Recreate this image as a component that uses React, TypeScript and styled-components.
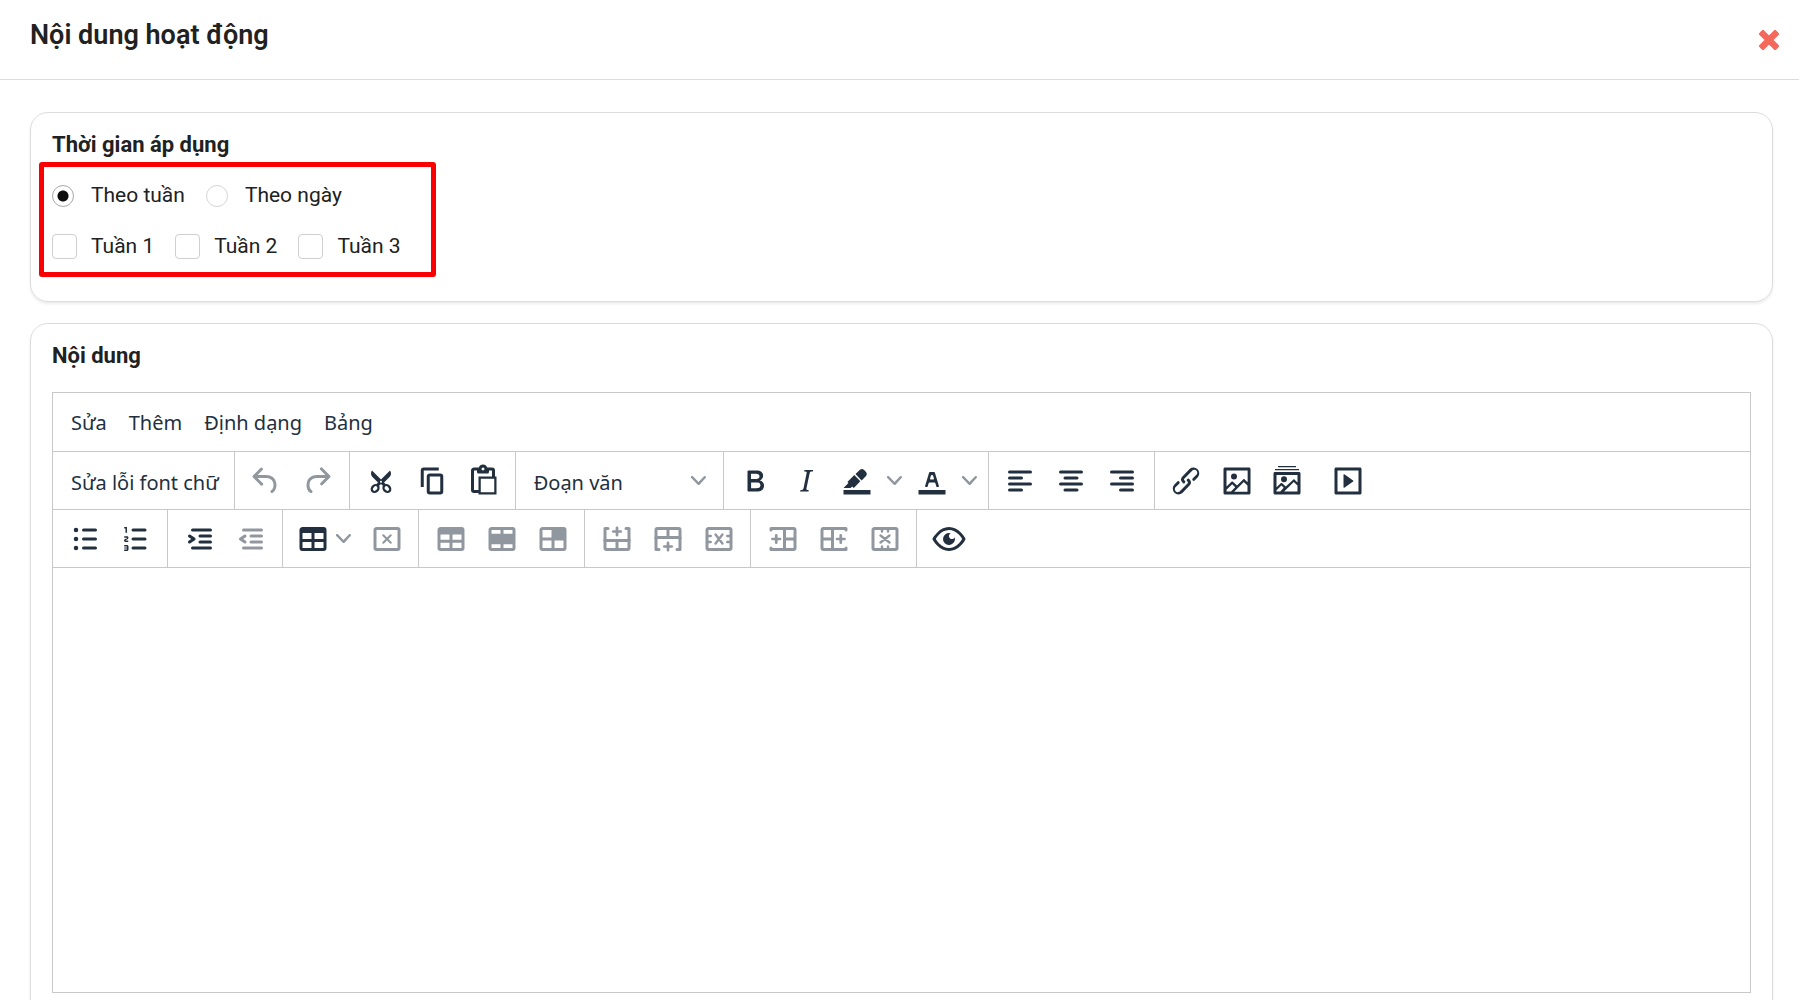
import React from "react";
import styled, { createGlobalStyle } from "styled-components";

const ink = "#222f3e";
const muted = "#91979f";
const line = "#c8c8c8";
const uiFont = `"Segoe UI", "Noto Sans", "Open Sans", sans-serif`;

const GlobalStyle = createGlobalStyle`
  * { box-sizing: border-box; }
  body {
    margin: 0;
    background: #fff;
    color: #212121;
    font-family: Roboto, "Noto Sans", sans-serif;
  }
  button, input, select, textarea { font: inherit; color: inherit; margin: 0; }
`;

const Dialog = styled.div`
  height: 100vh;
  display: flex;
  flex-direction: column;
  overflow: hidden;
`;

const Header = styled.header`
  flex: none;
  display: flex;
  align-items: flex-start;
  justify-content: space-between;
  height: 80px;
  padding: 18px 19px 0 30px;
  border-bottom: 1px solid #dcdcdc;
`;

const Title = styled.h1`
  margin: 0;
  font-size: 27px;
  line-height: 34px;
  font-weight: 600;
`;

const CloseButton = styled.button`
  display: flex;
  padding: 12px 0;
  width: 22px;
  justify-content: center;
  border: 0;
  background: none;
  cursor: pointer;
`;

const Body = styled.main`
  flex: 1;
  min-height: 0;
  overflow: hidden;
  padding: 32px 26px 32px 30px;
  display: flex;
  flex-direction: column;
  gap: 21px;
`;

const Card = styled.section`
  flex: none;
  padding: 18px 21px 24px;
  border: 1px solid #dcdcdc;
  border-radius: 18px;
  box-shadow: 0 2px 3px rgba(0, 0, 0, 0.08);
`;

const CardTitle = styled.h2`
  margin: 0;
  font-size: 22px;
  line-height: 28px;
  font-weight: 700;
`;

const Options = styled.div`
  width: fit-content;
  margin: 3px 0 0 -13px;
  padding: 16px 30px 13px 8px;
  border: 5px solid #fb0000;
  border-radius: 3px;
  display: flex;
  flex-direction: column;
  gap: 26px;
`;

const OptionRow = styled.div`
  display: flex;
  gap: 21px;
`;

const Option = styled.label`
  display: grid;
  grid-template-columns: 39px auto;
  align-items: center;
  height: 25px;
  font-size: 21px;
  line-height: 25px;
  white-space: nowrap;
`;

const Radio = styled.input.attrs({ type: "radio" })`
  appearance: none;
  width: 22px;
  height: 22px;
  border: 1px solid #d4d4d4;
  border-radius: 50%;
  background: #fff;
  &:checked {
    border-color: #a8a8a8;
    background: radial-gradient(circle, #0c0c0c 5px, #fff 6px);
  }
`;

const Check = styled.input.attrs({ type: "checkbox" })`
  appearance: none;
  width: 25px;
  height: 25px;
  border: 1px solid #cfcfcf;
  border-radius: 4px;
  background: #fff;
  &:checked { background: #0c0c0c; }
`;

const Editor = styled.div`
  margin-top: 22px;
  border: 1px solid ${line};
  color: ${ink};
  font-family: ${uiFont};
  font-size: 20px;
`;

const MenuBar = styled.div`
  display: flex;
  align-items: center;
  height: 59px;
  padding: 0 7px;
  border-bottom: 1px solid ${line};
`;

const MenuButton = styled.button`
  height: 51px;
  padding: 1px 11px 0;
  border: 0;
  background: none;
`;

const Toolbar = styled.div`
  display: flex;
  height: 58px;
  border-bottom: 1px solid ${line};
`;

const Group = styled.div`
  display: flex;
  align-items: center;
  padding: 0 6px;
  border-right: 1px solid ${line};
  &:last-child { border-right: 0; }
`;

const ToolButton = styled.button<{ $width?: number; $start?: boolean }>`
  display: flex;
  align-items: center;
  justify-content: ${(p) => (p.$start ? "flex-start" : "center")};
  width: ${(p) => p.$width ?? 51}px;
  height: 51px;
  padding: ${(p) => (p.$start ? "0 6px" : "0")};
  border: 0;
  background: none;
  color: ${ink};
  &:disabled { color: ${muted}; }
`;

const TextButton = styled.button`
  height: 51px;
  padding: 3px 9px 0 12px;
  border: 0;
  background: none;
  white-space: nowrap;
`;

const SelectBox = styled.div`
  display: grid;
  grid-template-columns: 1fr 24px 6px;
  align-items: center;
  width: 195px;
`;

const Select = styled.select`
  grid-area: 1 / 1 / 2 / 4;
  appearance: none;
  height: 51px;
  padding: 3px 12px 0;
  border: 0;
  background: none;
`;

const ChevronSlot = styled.span`
  display: flex;
  justify-content: center;
  width: 24px;
  color: ${muted};
  pointer-events: none;
`;

const SelectChevron = styled(ChevronSlot)`
  grid-area: 1 / 2;
`;

const ChevronButton = styled.button`
  display: flex;
  align-items: center;
  justify-content: center;
  width: 24px;
  height: 51px;
  padding: 0;
  border: 0;
  background: none;
  color: ${muted};
`;

const Content = styled.textarea`
  display: block;
  width: 100%;
  height: 424px;
  padding: 16px;
  border: 0;
  outline: 0;
  resize: none;
  background: #fff;
`;

const Glyph = ({ children }: { children: React.ReactNode }) => (
  <svg width="36" height="36" viewBox="0 0 24 24" fill="currentColor" fillRule="evenodd" aria-hidden="true">
    {children}
  </svg>
);

const Chevron = () => (
  <svg width="15" height="15" viewBox="0 0 10 10" fill="currentColor" aria-hidden="true">
    <path d="M8.7 2.2c.3-.3.8-.3 1 0 .4.4.4.9 0 1.2L5.7 7.8c-.3.3-.9.3-1.2 0L.2 3.4a.8.8 0 0 1 0-1.2c.3-.3.8-.3 1.1 0L5 6l3.7-3.8z" />
  </svg>
);

const bars = (rows: [number, number, number][]) => (
  <g stroke="currentColor" strokeWidth="2" strokeLinecap="round">
    {rows.map(([x1, x2, y]) => (
      <path key={y} d={`M${x1} ${y}H${x2}`} />
    ))}
  </g>
);

const stroked = (d: string, width = 1.6) => (
  <path d={d} fill="none" stroke="currentColor" strokeWidth={width} strokeLinecap="round" strokeLinejoin="round" />
);

const frame = "M19 4a2 2 0 0 1 2 2v12a2 2 0 0 1-2 2H5a2 2 0 0 1-2-2V6c0-1.1.9-2 2-2h14z";

const icons: Record<string, React.ReactNode> = {
  undo: <path d="M6.4 8H12c3.7 0 6.2 2 6.8 5.1.6 2.7-.4 5.6-2.3 6.8a1 1 0 0 1-1-1.8c1.1-.6 1.8-2.7 1.4-4.6-.5-2.1-2.1-3.5-4.9-3.5H6.4l3.3 3.3a1 1 0 1 1-1.4 1.4l-5-5a1 1 0 0 1 0-1.4l5-5a1 1 0 0 1 1.4 1.4L6.4 8z" />,
  redo: <path d="M17.6 10H12c-2.8 0-4.4 1.4-4.9 3.5-.4 2 .3 4 1.4 4.6a1 1 0 1 1-1 1.8c-2-1.2-2.9-4.1-2.3-6.8.6-3 3-5.1 6.8-5.1h5.6l-3.3-3.3a1 1 0 1 1 1.4-1.4l5 5a1 1 0 0 1 0 1.4l-5 5a1 1 0 0 1-1.4-1.4l3.3-3.3z" />,
  cut: (
    <>
      <path d="M6 5l6 6 6-6 .5 1a3.3 3.3 0 0 1 0 2c0 .4-.3.7-.5 1l-4 4 1.2 1.2-1.6 1.3L12 14l-1.6 1.5-1.6-1.3L10 13 6 9l-.5-1a3.3 3.3 0 0 1 0-2c0-.4.3-.7.5-1zm6 6.8a.7.7 0 1 0 0 1.4.7.7 0 0 0 0-1.4z" />
      <g fill="none" stroke="currentColor" strokeWidth="1.5">
        <ellipse cx="8.1" cy="17" rx="2.5" ry="2" transform="rotate(-45 8.1 17)" />
        <ellipse cx="15.9" cy="17" rx="2.5" ry="2" transform="rotate(45 15.9 17)" />
      </g>
    </>
  ),
  copy: <path d="M16 3H6a2 2 0 0 0-2 2v11h2V5h10V3zm1 4a2 2 0 0 1 2 2v10a2 2 0 0 1-2 2h-7a2 2 0 0 1-2-2V9c0-1.2.9-2 2-2h7zm0 12V9h-7v10h7z" transform="translate(.5 0)" />,
  paste: <path d="M18 9V5h-2v1c0 .6-.4 1-1 1H9a1 1 0 0 1-1-1V5H6v13h3V9h9zM9 20H6a2 2 0 0 1-2-2V5c0-1.1.9-2 2-2h3.2A3 3 0 0 1 12 1a3 3 0 0 1 2.8 2H18a2 2 0 0 1 2 2v4h1v12H9v-1zm1.5-9.5v9h9v-9h-9zM12 3a1 1 0 0 0-1 1c0 .5.4 1 1 1s1-.5 1-1-.4-1-1-1z" />,
  bold: <path d="M7.8 19c-.3 0-.5 0-.6-.2l-.2-.5V5.7c0-.2 0-.4.2-.5l.6-.2h5c1.5 0 2.7.3 3.5 1 .7.6 1.1 1.4 1.1 2.5a3 3 0 0 1-.6 1.9c-.4.6-1 1-1.6 1.2.4.1.9.3 1.3.6s.8.7 1 1.2c.4.4.5 1 .5 1.6 0 1.3-.4 2.3-1.3 3-.8.7-2.1 1-3.8 1H7.8zm5-8.3c.6 0 1.2-.1 1.6-.5.4-.3.6-.7.6-1.3 0-1.1-.8-1.7-2.3-1.7H9.3v3.5h3.4zm.5 6c.7 0 1.3-.1 1.7-.4.4-.4.6-.9.6-1.5s-.2-1-.7-1.4c-.4-.3-1-.4-2-.4H9.4v3.8h4z" />,
  italic: <path d="M16.7 4.7l-.1.9h-.3c-.6 0-1 0-1.4.3-.3.3-.4.6-.5 1.1l-2.1 9.8v.6c0 .5.4.8 1.4.8h.2l-.2.8H8l.2-.8h.2c1.1 0 1.8-.5 2-1.5l2-9.8.1-.5c0-.6-.4-.8-1.4-.8h-.3l.2-.9h5.8z" />,
  highlight: (
    <>
      <path d="M3 18h18v3H3z" />
      <path d="M7.7 16.7H3l3.3-3.3-.7-.8L10.2 8l4 4.1-4 4.2c-.2.2-.6.2-.8 0l-.6-.7-1.1 1.1zm5-7.5L11 7.4l3-2.9a2 2 0 0 1 2.6 0L18 6c.7.7.7 2 0 2.7l-2.9 2.9-1.8-1.8-.6-.6z" />
    </>
  ),
  textColor: (
    <>
      <path d="M3 18h18v3H3z" />
      <path d="M8.7 16h-.8a.5.5 0 0 1-.5-.6l2.7-9c.1-.3.3-.4.5-.4h2.8c.2 0 .4.1.5.4l2.7 9a.5.5 0 0 1-.5.6h-.8a.5.5 0 0 1-.4-.4l-.7-2.2c0-.3-.3-.4-.5-.4h-3.4c-.2 0-.4.1-.5.4l-.7 2.2c0 .3-.2.4-.4.4zm2.6-7.6l-.6 2a.5.5 0 0 0 .5.6h1.6a.5.5 0 0 0 .5-.6l-.6-2c0-.3-.3-.4-.5-.4h-.4c-.2 0-.4.1-.5.4z" />
    </>
  ),
  alignLeft: bars([[5, 19, 6], [5, 13, 10], [5, 19, 14], [5, 13, 18]]),
  alignCenter: bars([[5, 19, 6], [8, 16, 10], [5, 19, 14], [8, 16, 18]]),
  alignRight: bars([[5, 19, 6], [11, 19, 10], [5, 19, 14], [11, 19, 18]]),
  link: <path d="M6.2 12.3a1 1 0 0 1 1.4 1.4l-2.1 2a2 2 0 1 0 2.7 2.8l4.8-4.8a1 1 0 0 0 0-1.4 1 1 0 1 1 1.4-1.3 2.9 2.9 0 0 1 0 4L9.6 20a3.9 3.9 0 0 1-5.5-5.5l2-2zm11.6-.6a1 1 0 0 1-1.4-1.4l2-2a2 2 0 1 0-2.6-2.8L11 10.3a1 1 0 0 0 0 1.4A1 1 0 1 1 9.6 13a2.9 2.9 0 0 1 0-4L14.4 4a3.9 3.9 0 0 1 5.5 5.5l-2 2z" />,
  image: <path d="M5 15.7l3.3-3.2c.3-.3.7-.3 1 0L12 15l4.1-4c.3-.4.8-.4 1 0l2 1.9V5H5v10.7zM5 18V19h3l2.8-2.9-2-2L5 17.9zm14-3l-2.5-2.4-6.4 6.5H19v-4zM4 3h16c.6 0 1 .4 1 1v16c0 .6-.4 1-1 1H4a1 1 0 0 1-1-1V4c0-.6.4-1 1-1zm6 8a2 2 0 1 0 0-4 2 2 0 0 0 0 4z" />,
  gallery: (
    <>
      <path d="M5 16.2l2.8-2.7c.3-.3.7-.3 1 0l2.4 2.1 4.9-4.5c.3-.4.8-.4 1 0l1.9 1.9V8H5v8.2zM5 18.2V19h2.5l2.3-2.5-1.5-1.5L5 18.2zm14-3.2l-2.5-2.4-6.4 6.4H19v-4zM4 6h16c.6 0 1 .4 1 1v13c0 .6-.4 1-1 1H4a1 1 0 0 1-1-1V7c0-.6.4-1 1-1zm6 6.800a2 2 0 1 0 0-4 2 2 0 0 0 0 4z" />
      <path d="M4 4h16v.8H4zM6 2h12v.8H6z" />
    </>
  ),
  media: <path d="M4 3h16c.6 0 1 .4 1 1v16c0 .6-.4 1-1 1H4a1 1 0 0 1-1-1V4c0-.6.4-1 1-1zm1 2v14h14V5H5zm4.8 2.6l5.6 4a.5.5 0 0 1 0 .8l-5.6 4A.5.5 0 0 1 9 16V8a.5.5 0 0 1 .8-.4z" />,
  bullets: (
    <>
      {bars([[11, 19, 6], [11, 19, 12], [11, 19, 18]])}
      <circle cx="6" cy="6" r="1.5" />
      <circle cx="6" cy="12" r="1.5" />
      <circle cx="6" cy="18" r="1.5" />
    </>
  ),
  numbers: (
    <>
      {bars([[10, 18, 6], [10, 18, 12], [10, 18, 18]])}
      <path d="M6 4v3.5c0 .3-.2.5-.5.5a.5.5 0 0 1-.5-.5V5h-.5a.5.5 0 0 1 0-1H6zm-1 8.8l.2.2h1.3c.3 0 .5.2.5.5s-.2.5-.5.5H4.9a1 1 0 0 1-.9-1V13c0-.4.3-.8.6-1l1.2-.4.2-.3a.2.2 0 0 0-.2-.2H4.5a.5.5 0 0 1-.5-.5c0-.3.2-.5.5-.5h1.6c.5 0 .9.4.9 1v.1c0 .4-.3.8-.6 1l-1.2.4-.2.3zM7 17v2c0 .6-.4 1-1 1H4.5a.5.5 0 0 1 0-1h1.2c.2 0 .3-.1.3-.3 0-.2-.1-.3-.3-.3H4.4a.4.4 0 1 1 0-.8h1.3c.2 0 .3-.1.3-.3 0-.2-.1-.3-.3-.3H4.5a.5.5 0 1 1 0-1H6c.6 0 1 .4 1 1z" />
    </>
  ),
  indent: (
    <>
      {bars([[7, 19, 6], [12, 19, 10], [12, 19, 14], [7, 19, 18]])}
      <path d="M4.4 13.2L6.2 12l-1.8-1.2a1 1 0 0 1 1.2-1.6l3 2a1 1 0 0 1 0 1.6l-3 2a1 1 0 1 1-1.2-1.6z" />
    </>
  ),
  outdent: (
    <>
      {bars([[7, 19, 6], [12, 19, 10], [12, 19, 14], [7, 19, 18]])}
      <path d="M8.6 13.2a1 1 0 0 1-1.2 1.6l-3-2a1 1 0 0 1 0-1.6l3-2a1 1 0 0 1 1.2 1.6L6.8 12l1.8 1.2z" />
    </>
  ),
  table: <path d={`${frame}M5 14v4h6v-4H5zm14 0h-6v4h6v-4zm0-6h-6v4h6V8zM5 12h6V8H5v4z`} />,
  tableDelete: (
    <>
      <path d={`${frame}M5 6v12h14V6H5z`} />
      {stroked("M9.5 9.5l5 5M14.5 9.5l-5 5", 1.4)}
    </>
  ),
  tableRowProps: <path d={`${frame}M5 14.5V18h6v-3.5H5zm14 0h-6V18h6v-3.5zm0-5.5h-6v3.5h6V9zM5 12.5h6V9H5v3.5z`} />,
  tableRow: <path d={`${frame}M5 15.5V18h6v-2.5H5zm8 0V18h6v-2.5h-6zM5 6v2.5h6V6H5zm8 0v2.5h6V6h-6z`} />,
  tableCell: <path d={`${frame}M5 6v5h6V6H5zm0 7v5h6v-5H5zm8 0v5h6v-5h-6z`} />,
  rowAbove: (
    <>
      <path d="M3 12h18v6a2 2 0 0 1-2 2H5a2 2 0 0 1-2-2v-6zm2 2v4h6v-4H5zm8 0v4h6v-4h-6z" />
      {stroked("M6 5H4v8M18 5h2v8", 2)}
      {stroked("M12 4.5v5M9.5 7h5", 1.8)}
    </>
  ),
  rowBelow: (
    <>
      <path d="M3 12h18V6a2 2 0 0 0-2-2H5a2 2 0 0 0-2 2v6zm2-2V6h6v4H5zm8 0V6h6v4h-6z" />
      {stroked("M6 19H4v-8M18 19h2v-8", 2)}
      {stroked("M12 14.5v5M9.5 17h5", 1.8)}
    </>
  ),
  rowDelete: (
    <>
      <path d={`${frame}M5 6v12h14V6H5z`} />
      {stroked("M9.7 9l4.6 6M14.3 9l-4.6 6M4 10h2.5M4 14h2.5M17.5 10h2.500M17.5 14h2.500")}
    </>
  ),
  colBefore: (
    <>
      <path d="M12 4h7a2 2 0 0 1 2 2v12a2 2 0 0 1-2 2h-7V4zm2 2v5h5V6h-5zm0 7v5h5v-5h-5z" />
      {stroked("M4 6V5h9M4 18v1h9", 2)}
      {stroked("M7.500 9.5v5M5 12h5", 1.8)}
    </>
  ),
  colAfter: (
    <>
      <path d="M12 4H5a2 2 0 0 0-2 2v12a2 2 0 0 0 2 2h7V4zM10 6v5H5V6h5zm0 7v5H5v-5h5z" />
      {stroked("M20 6V5h-9M20 18v1h-9", 2)}
      {stroked("M16.5 9.5v5M14 12h5", 1.8)}
    </>
  ),
  colDelete: (
    <>
      <path d={`${frame}M5 6v12h14V6H5z`} />
      {stroked("M9 9.7l6 4.6M15 9.7l-6 4.6M10 5v2M14 5v2M10 17v2M14 17v2")}
    </>
  ),
  preview: <path d="M3.5 12.5c.5.8 1.1 1.6 1.8 2.3 2 2 4.2 3.2 6.7 3.2s4.7-1.2 6.7-3.2a16.2 16.2 0 0 0 2.1-2.8 15.7 15.7 0 0 0-2.1-2.8c-2-2-4.2-3.2-6.7-3.2a9.3 9.3 0 0 0-6.7 3.2A16.2 16.2 0 0 0 3.2 12c0 .2.2.3.3.5zm-2.4-1l.7-1.2L4 7.8C6.2 5.4 8.9 4 12 4c3 0 5.8 1.4 8.1 3.8a18.2 18.2 0 0 1 2.8 3.7v1l-.7 1.2a18.2 18.2 0 0 1-2.1 2.5c-2.3 2.4-5 3.8-8.1 3.8-3 0-5.8-1.4-8.1-3.8a18.2 18.2 0 0 1-2.8-3.7 1 1 0 0 1 0-1zm12-3.3a2 2 0 1 0 2.7 2.6 4 4 0 1 1-2.6-2.6z" />,
};

type ToolProps = { icon: string; label: string; disabled?: boolean; width?: number; start?: boolean };

const Tool = ({ icon, label, disabled, width, start }: ToolProps) => (
  <ToolButton type="button" aria-label={label} disabled={disabled} $width={width} $start={start}>
    <Glyph>{icons[icon]}</Glyph>
  </ToolButton>
);

const SplitTool = ({ icon, label }: ToolProps) => (
  <>
    <Tool icon={icon} label={label} />
    <ChevronButton type="button" aria-label={`${label}: tùy chọn`}>
      <Chevron />
    </ChevronButton>
  </>
);

export default function App() {
  return (
    <Dialog role="dialog" aria-labelledby="dialog-title">
      <GlobalStyle />
      <Header>
        <Title id="dialog-title">Nội dung hoạt động</Title>
        <CloseButton type="button" aria-label="Đóng">
          <svg width="20" height="20" viewBox="0 0 20 20" aria-hidden="true">
            <path d="M4 4l12 12M16 4L4 16" stroke="#f4695c" strokeWidth="6.5" strokeLinecap="square" />
            <path d="M3.5 3.5l13 13M16.5 3.5l-13 13" stroke="#f4695c" strokeWidth="5" strokeLinecap="round" />
          </svg>
        </CloseButton>
      </Header>
      <Body>
        <Card>
          <CardTitle id="apply-time">Thời gian áp dụng</CardTitle>
          <Options role="group" aria-labelledby="apply-time">
            <OptionRow>
              <Option><Radio name="period" defaultChecked />Theo tuần</Option>
              <Option><Radio name="period" />Theo ngày</Option>
            </OptionRow>
            <OptionRow>
              {[1, 2, 3].map((n) => (
                <Option key={n}><Check name="week" value={n} /><span>Tuần {n}</span></Option>
              ))}
            </OptionRow>
          </Options>
        </Card>
        <Card>
          <CardTitle>Nội dung</CardTitle>
          <Editor>
            <MenuBar>
              {["Sửa", "Thêm", "Định dạng", "Bảng"].map((m) => (
                <MenuButton type="button" key={m}>{m}</MenuButton>
              ))}
            </MenuBar>
            <Toolbar>
              <Group><TextButton type="button">Sửa lỗi font chữ</TextButton></Group>
              <Group>
                <Tool icon="undo" label="Hoàn tác" disabled />
                <Tool icon="redo" label="Làm lại" disabled />
              </Group>
              <Group>
                <Tool icon="cut" label="Cắt" />
                <Tool icon="copy" label="Sao chép" />
                <Tool icon="paste" label="Dán" />
              </Group>
              <Group>
                <SelectBox>
                  <Select aria-label="Kiểu khối"><option>Đoạn văn</option></Select>
                  <SelectChevron><Chevron /></SelectChevron>
                </SelectBox>
              </Group>
              <Group>
                <Tool icon="bold" label="In đậm" />
                <Tool icon="italic" label="In nghiêng" />
                <SplitTool icon="highlight" label="Màu nền" />
                <SplitTool icon="textColor" label="Màu chữ" />
              </Group>
              <Group>
                <Tool icon="alignLeft" label="Căn trái" />
                <Tool icon="alignCenter" label="Căn giữa" />
                <Tool icon="alignRight" label="Căn phải" />
              </Group>
              <Group>
                <Tool icon="link" label="Liên kết" />
                <Tool icon="image" label="Hình ảnh" />
                <Tool icon="gallery" label="Thư viện ảnh" width={60} start />
                <Tool icon="media" label="Video" />
              </Group>
            </Toolbar>
            <Toolbar>
              <Group>
                <Tool icon="bullets" label="Danh sách dấu đầu dòng" />
                <Tool icon="numbers" label="Danh sách đánh số" />
              </Group>
              <Group>
                <Tool icon="indent" label="Tăng thụt lề" />
                <Tool icon="outdent" label="Giảm thụt lề" disabled />
              </Group>
              <Group>
                <ToolButton type="button" aria-label="Bảng" $width={72}>
                  <Glyph>{icons.table}</Glyph>
                  <ChevronSlot><Chevron /></ChevronSlot>
                </ToolButton>
                <Tool icon="tableDelete" label="Xóa bảng" disabled />
              </Group>
              <Group>
                <Tool icon="tableRowProps" label="Thuộc tính bảng" disabled />
                <Tool icon="tableRow" label="Thuộc tính hàng" disabled />
                <Tool icon="tableCell" label="Thuộc tính ô" disabled />
              </Group>
              <Group>
                <Tool icon="rowAbove" label="Chèn hàng phía trên" disabled />
                <Tool icon="rowBelow" label="Chèn hàng phía dưới" disabled />
                <Tool icon="rowDelete" label="Xóa hàng" disabled />
              </Group>
              <Group>
                <Tool icon="colBefore" label="Chèn cột bên trái" disabled />
                <Tool icon="colAfter" label="Chèn cột bên phải" disabled />
                <Tool icon="colDelete" label="Xóa cột" disabled />
              </Group>
              <Group>
                <Tool icon="preview" label="Xem trước" />
              </Group>
            </Toolbar>
            <Content aria-label="Nội dung" />
          </Editor>
        </Card>
      </Body>
    </Dialog>
  );
}
